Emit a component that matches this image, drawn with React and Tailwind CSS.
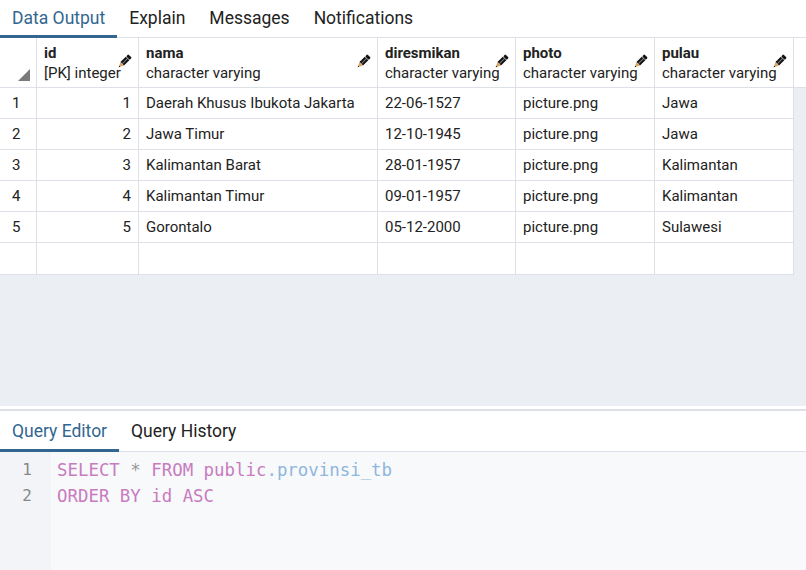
const COLS = [
  { key: 'id', name: 'id', type: '[PK] integer', w: 'w-[102px]', right: true },
  { key: 'nama', name: 'nama', type: 'character varying', w: 'w-[239px]' },
  { key: 'diresmikan', name: 'diresmikan', type: 'character varying', w: 'w-[138px]' },
  { key: 'photo', name: 'photo', type: 'character varying', w: 'w-[139px]' },
  { key: 'pulau', name: 'pulau', type: 'character varying', w: 'w-[139px]' },
]

const ROWS = [
  { id: 1, nama: 'Daerah Khusus Ibukota Jakarta', diresmikan: '22-06-1527', photo: 'picture.png', pulau: 'Jawa' },
  { id: 2, nama: 'Jawa Timur', diresmikan: '12-10-1945', photo: 'picture.png', pulau: 'Jawa' },
  { id: 3, nama: 'Kalimantan Barat', diresmikan: '28-01-1957', photo: 'picture.png', pulau: 'Kalimantan' },
  { id: 4, nama: 'Kalimantan Timur', diresmikan: '09-01-1957', photo: 'picture.png', pulau: 'Kalimantan' },
  { id: 5, nama: 'Gorontalo', diresmikan: '05-12-2000', photo: 'picture.png', pulau: 'Sulawesi' },
]

// little edit pencil shown in each column header
function Pencil() {
  return (
    <svg width="16" height="16" viewBox="0 0 16 16" className="absolute right-[6px] top-[16px]">
      <g transform="rotate(45 8 8)">
        <rect x="5.5" y="-0.5" width="5" height="3" rx="1" fill="#111" />
        <rect x="5.5" y="3" width="5" height="7.5" fill="#111" />
        <rect x="7.5" y="3.2" width="1" height="7" fill="#fff" opacity="0.45" />
        <polygon points="5.5,10.5 10.5,10.5 8,15.5" fill="#d9a56a" />
        <polygon points="7.2,14 8.8,14 8,15.5" fill="#111" />
      </g>
    </svg>
  )
}

function Tabs({ items, height }) {
  return (
    <div className={`flex ${height} border-b border-[#dde0e6] text-[17.5px] text-[#222]`}>
      {items.map((t, i) => (
        <div
          key={t}
          className={i === 0 ? 'relative px-3 flex items-center text-[#326690]' : 'px-3 flex items-center'}
        >
          {t}
          {i === 0 && <div className="absolute left-0 right-0 bottom-[-1px] h-[3px] bg-[#326690]" />}
        </div>
      ))}
    </div>
  )
}

export default function App() {
  return (
    <div className="w-[806px] h-[570px] overflow-hidden bg-white flex flex-col" style={{ fontFamily: 'Roboto, "Noto Sans", sans-serif' }}>
      <Tabs items={['Data Output', 'Explain', 'Messages', 'Notifications']} height="h-[38px]" />

      {/* result grid */}
      <div className="flex-1 bg-[#ebeef3] text-[15px] text-[#222] flex flex-col">
        <div className="flex h-[50px] shrink-0 bg-white border-b border-[#dde0e6]">
          <div className="relative w-[37px] shrink-0 border-r border-[#dde0e6]">
            <div className="absolute right-[6px] bottom-[6px] w-0 h-0 border-l-[12px] border-l-transparent border-b-[12px] border-b-[#7a7a7a]" />
          </div>
          {COLS.map(c => (
            <div key={c.key} className={`relative ${c.w} shrink-0 border-r border-[#dde0e6] pl-[7px] pt-[5px] leading-[20px]`}>
              <div className="font-bold">{c.name}</div>
              <div className="whitespace-nowrap">{c.type}</div>
              <Pencil />
            </div>
          ))}
        </div>

        {ROWS.map(r => (
          <div key={r.id} className="flex h-[31px] shrink-0 w-[794px] bg-white border-b border-[#dde0e6]">
            <div className="w-[37px] shrink-0 border-r border-[#dde0e6] pl-3 flex items-center">{r.id}</div>
            {COLS.map(c => (
              <div
                key={c.key}
                className={`${c.w} shrink-0 border-r border-[#dde0e6] px-[7px] flex items-center whitespace-nowrap ${c.right ? 'justify-end' : ''}`}
              >
                {r[c.key]}
              </div>
            ))}
          </div>
        ))}
        <div className="flex h-[32px] shrink-0 w-[794px] bg-white border-b border-[#dde0e6]">
          <div className="w-[37px] shrink-0 border-r border-[#dde0e6]" />
          {COLS.map(c => (
            <div key={c.key} className={`${c.w} shrink-0 border-r border-[#dde0e6]`} />
          ))}
        </div>
      </div>

      {/* query panel */}
      <div className="h-[164px] shrink-0 flex flex-col border-t-[3px] border-white">
        <div className="border-t-2 border-[#dde0e6]">
          <Tabs items={['Query Editor', 'Query History']} height="h-[41px]" />
        </div>
        <div className="flex-1 flex bg-[#f8f9fb]" style={{ fontFamily: '"DejaVu Sans Mono", "Liberation Mono", monospace' }}>
          <div className="w-[51px] bg-[#f2f4f8] pt-[5px] pr-[19px] text-right text-[16px] leading-[26px] text-[#888]">
            <div>1</div>
            <div>2</div>
          </div>
          <div className="pl-[6px] pt-[5px] text-[17.4px] leading-[26px] whitespace-pre">
            <div>
              <span className="text-[#c97bbf]">SELECT</span>
              <span className="text-[#999]"> * </span>
              <span className="text-[#c97bbf]">FROM public</span>
              <span className="text-[#8fb6dc]">.provinsi_tb</span>
            </div>
            <div className="text-[#c97bbf]">ORDER BY id ASC</div>
          </div>
        </div>
      </div>
    </div>
  )
}
